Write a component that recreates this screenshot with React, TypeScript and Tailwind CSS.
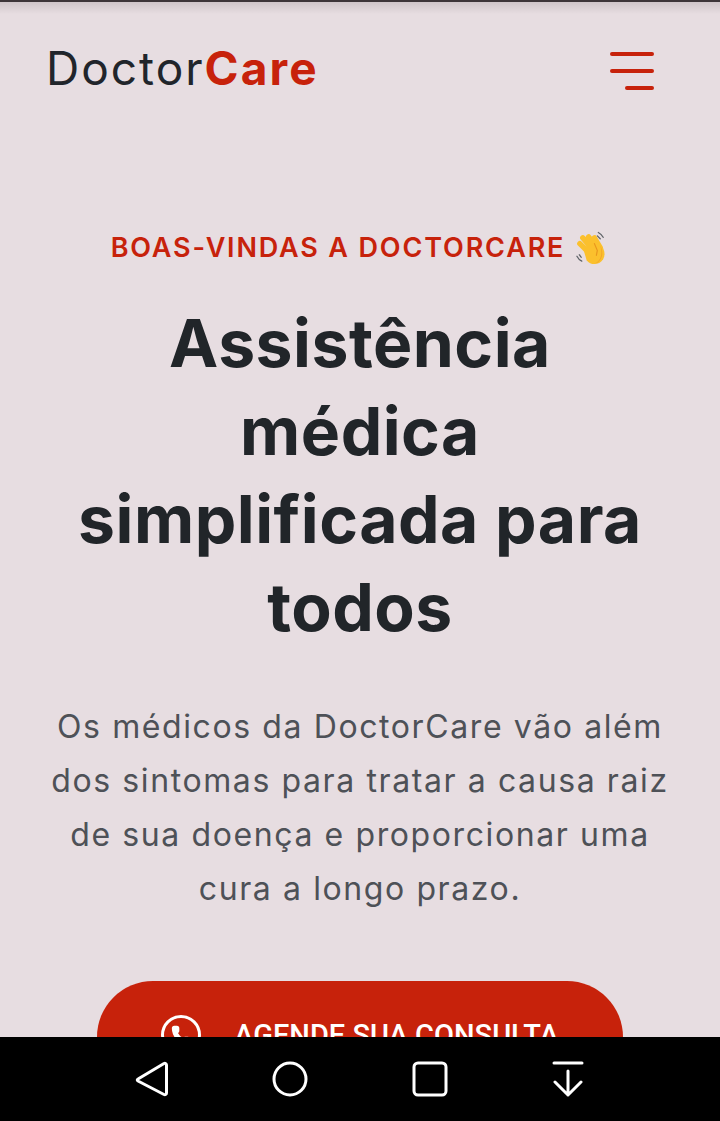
import { Phone } from 'lucide-react';

const FONT = "font-['Inter','Noto_Sans',sans-serif]";

function WaveEmoji() {
  return (
    <svg viewBox="0 0 36 36" className="ml-[9px] h-[35px] w-[35px]" aria-hidden>
      <g fill="none" stroke="#fbc02d" strokeWidth="5.500" strokeLinecap="round">
        <path d="M6 13 15 22M9 7 19 19M15 6 23 17M21 7l6 10" />
      </g>
      <path d="M10 20 22 11l8 7c3 6 1 12-4 15-5 2-10 1-13-3z" fill="#fbc02d" />
      <path d="M27 15c3 6 3 12-2 17-1 1-3 1.500-4 1.500 6-2 9-9 6-18.500z" fill="#f2a32b" />
      <path d="M21 13l3 7-1 5" fill="none" stroke="#e8961e" strokeWidth="1.200" strokeLinecap="round" />
      <path d="M25 1.500c2 1 4 3 5 5M24 5c1 1 2 2 3 3M3 26c1 2 3 4 5 5M5.500 24.500c1 1 1 2 2 2.500" fill="none" stroke="#5f6368" strokeWidth="1.300" strokeLinecap="round" />
    </svg>
  );
}

function NavBar() {
  return (
    <div className="absolute inset-x-0 bottom-0 flex h-[84px] items-center justify-between bg-black pl-[135px] pr-[136px] text-white">
      <svg width="34" height="36" viewBox="0 0 34 36" fill="none" stroke="currentColor" strokeWidth="3" strokeLinejoin="round">
        <path d="M3 18 29 2.500c1-.5 2.500 0 2.500 1.500v28c0 1.500-1.500 2-2.500 1.500L3 20c-1-.5-1-1.500 0-2z" />
      </svg>
      <svg width="36" height="36" viewBox="0 0 36 36" fill="none" stroke="currentColor" strokeWidth="3" className="-ml-[1px] mr-[-1px]">
        <circle cx="18" cy="18" r="16" />
      </svg>
      <svg width="36" height="36" viewBox="0 0 36 36" fill="none" stroke="currentColor" strokeWidth="3">
        <rect x="2" y="2" width="32" height="32" rx="4" />
      </svg>
      <svg width="32" height="36" viewBox="0 0 32 36" fill="none" stroke="currentColor" strokeWidth="3" strokeLinecap="round" strokeLinejoin="round">
        <path d="M2 2h28M16 10v24M3 21l13 13 13-13" />
      </svg>
    </div>
  );
}

export default function App() {
  return (
    <div className={`relative h-[1121px] w-[720px] overflow-hidden bg-[#e7dde1] ${FONT}`}>
      <div className="h-[2px] bg-[#3d3539]" />
      <div className="absolute inset-x-0 top-[2px] h-[12px] bg-gradient-to-b from-[#cfc5c9] to-[#e7dde1]" />

      <header className="flex items-center justify-between pl-[46px] pr-[66px] pt-[38px]">
        <div className="text-[46px] leading-[56px] text-[#21252b]">
          <span className="tracking-[2px]">Doctor</span>
          <span className="font-bold tracking-[2.100px] text-[#c7220b]">Care</span>
        </div>
        <div className="mt-[6px] flex w-[44px] flex-col items-end gap-[13px]">
          <span className="h-[4px] w-[44px] rounded-full bg-[#c7220b]" />
          <span className="h-[4px] w-[44px] rounded-full bg-[#c7220b]" />
          <span className="h-[4px] w-[29px] rounded-full bg-[#c7220b]" />
        </div>
      </header>

      <main className="flex flex-col items-center px-[40px] pt-[130px] text-center">
        <p className="flex items-center text-[27px] font-semibold leading-[44px] tracking-[1.85px] text-[#c7220b]">
          BOAS-VINDAS A DOCTORCARE
          <WaveEmoji />
        </p>
        <h1 className="mt-[29px] max-w-[600px] text-[66px] font-bold leading-[88px] tracking-[0.5px] text-[#212529]">
          Assistência médica simplificada para todos
        </h1>
        <p className="mt-[49px] text-[32px] leading-[54px] tracking-[1.6px] text-[#4e5157]">
          Os médicos da DoctorCare vão além dos sintomas para tratar a causa raiz de sua doença e proporcionar uma cura a longo prazo.
        </p>
        <button className="mt-[65px] flex h-[112px] w-[526px] shrink-0 items-start justify-center gap-[33px] rounded-[56px] bg-[#c7220b] pt-[34px] text-[29px] font-bold text-white">
          <span className="flex h-[40px] w-[40px] items-center justify-center rounded-full border-[3px] border-white">
            <Phone className="h-[20px] w-[20px]" fill="currentColor" />
          </span>
          <span className="font-['Roboto',sans-serif] font-medium leading-[40px]">AGENDE SUA CONSULTA</span>
        </button>
      </main>

      <NavBar />
    </div>
  );
}
